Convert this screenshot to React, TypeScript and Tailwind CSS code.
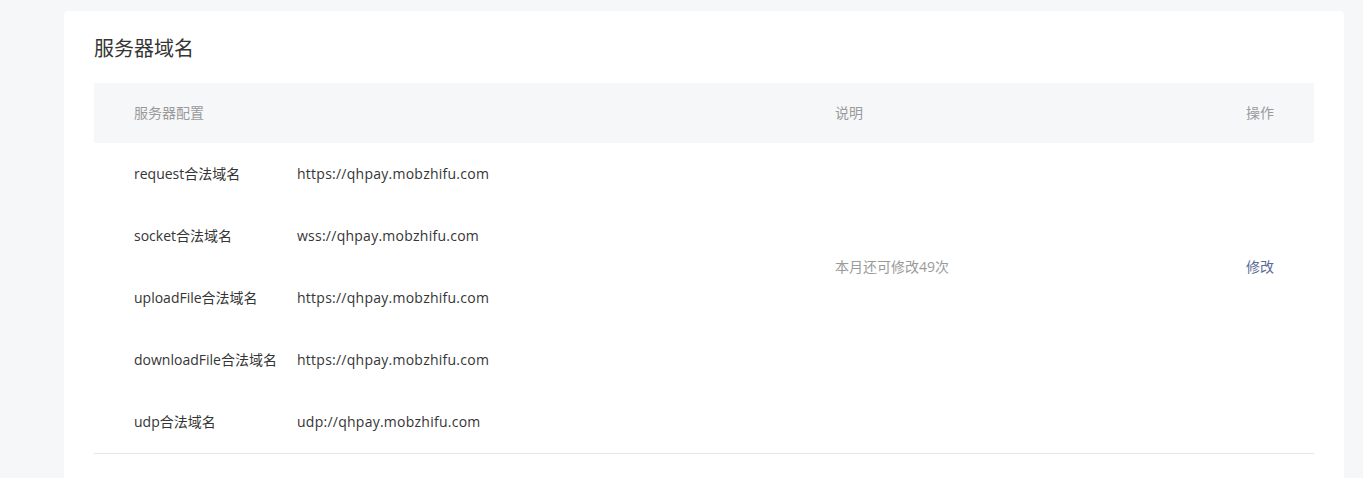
const rows = [
	{ name: "request合法域名", value: "https://qhpay.mobzhifu.com" },
	{ name: "socket合法域名", value: "wss://qhpay.mobzhifu.com" },
	{ name: "uploadFile合法域名", value: "https://qhpay.mobzhifu.com" },
	{ name: "downloadFile合法域名", value: "https://qhpay.mobzhifu.com" },
	{ name: "udp合法域名", value: "udp://qhpay.mobzhifu.com" },
];

export default function App() {
	return (
		<div
			className="min-h-[478px] bg-[#f6f7f9] pt-[11px] pl-16 pr-[19px]"
			style={{ fontFamily: '"Open Sans", "Noto Sans CJK SC", sans-serif' }}
		>
			<div className="bg-white rounded-[4px] px-[30px] pt-[25px] pb-10">
				<h2 className="text-[20px] leading-[26px] text-[#353535] mb-[21px]">
					服务器域名
				</h2>
				<div className="flex h-[60px] items-center bg-[#f6f7f9] text-[14px] text-[#9a9a9a]">
					<div className="flex-1 pl-10 pb-px">服务器配置</div>
					<div className="w-[369px] pb-px">说明</div>
					<div className="w-[110px] pr-10 pb-px text-right">操作</div>
				</div>
				<div className="flex border-b border-[#e7e7eb] text-[14px]">
					<div className="flex-1 pl-10">
						{rows.map((r) => (
							<div key={r.name} className="flex h-[62px] items-center pb-0.5 text-[#353535]">
								<div className="w-[163px]">{r.name}</div>
								<div className="tracking-[0.25px]">{r.value}</div>
							</div>
						))}
					</div>
					<div className="w-[369px] h-[248px] flex items-center pb-0.5 text-[#9a9a9a]">
						本月还可修改49次
					</div>
					<div className="w-[110px] h-[248px] pr-10 pb-0.5 flex items-center justify-end">
						<a className="text-[#576b95] cursor-pointer">修改</a>
					</div>
				</div>
			</div>
		</div>
	);
}
